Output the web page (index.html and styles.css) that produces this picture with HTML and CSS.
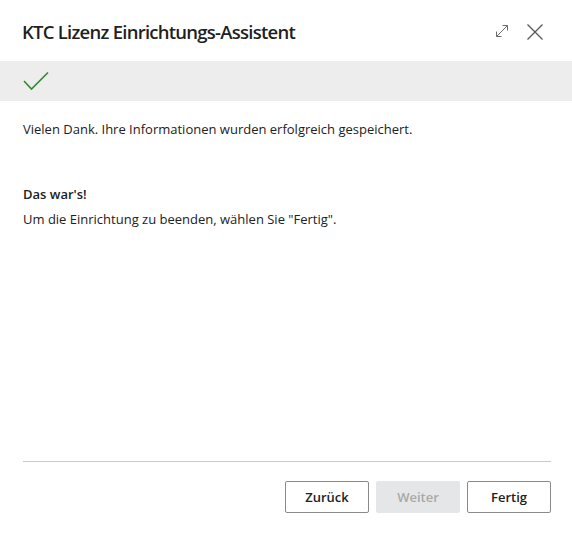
FILE: index.html
```html
<!DOCTYPE html>
<html lang="de">
<head>
<meta charset="utf-8">
<link rel="stylesheet" href="styles.css">
</head>
<body>
<div class="dialog">
  <header class="header">
    <h1 class="title">KTC Lizenz Einrichtungs-Assistent</h1>
    <div class="actions">
      <svg class="icon expand" width="16" height="16" viewBox="0 0 16 16">
        <path d="M2.5 13.5 L13.5 2.5 M8.5 2.5 H13.5 V7.5 M2.5 8.5 V13.5 H7.5" fill="none" stroke="#6b6b6b" stroke-width="1"/>
      </svg>
      <svg class="icon close" width="18" height="18" viewBox="0 0 18 18">
        <path d="M1.5 1.5 L16.5 16.5 M16.5 1.5 L1.5 16.5" fill="none" stroke="#555" stroke-width="1.3"/>
      </svg>
    </div>
  </header>
  <div class="band">
    <svg class="check" width="26" height="20" viewBox="0 0 26 20">
      <path d="M1 10 L8.5 18 L25 1.5" fill="none" stroke="#2e8b2e" stroke-width="1.6"/>
    </svg>
  </div>
  <main class="content">
    <p class="msg">Vielen Dank. Ihre Informationen wurden erfolgreich gespeichert.</p>
    <p class="strong">Das war's!</p>
    <p class="msg2">Um die Einrichtung zu beenden, wählen Sie "Fertig".</p>
  </main>
  <footer class="footer">
    <div class="buttons">
      <button class="btn">Zurück</button>
      <button class="btn disabled">Weiter</button>
      <button class="btn">Fertig</button>
    </div>
  </footer>
</div>
</body>
</html>
```
FILE: styles.css
```css
html, body {
  margin: 0;
  padding: 0;
  background: #fff;
}
body {
  font-family: "Open Sans", "Noto Sans", sans-serif;
  color: #212121;
  width: 572px;
  height: 534px;
  overflow: hidden;
}
.dialog {
  display: flex;
  flex-direction: column;
  height: 534px;
}
.header {
  display: flex;
  align-items: center;
  justify-content: space-between;
  height: 61px;
  padding: 0 28px 0 22px;
  box-sizing: border-box;
}
.title {
  margin: 0;
  font-size: 18.5px;
  font-weight: 600;
  letter-spacing: -0.75px;
  color: #1f1f1f;
  padding-top: 1px;
}
.actions {
  display: flex;
  align-items: center;
  gap: 16px;
  padding-top: 2px;
}
.expand {
  margin-top: -1px;
}
.band {
  height: 40px;
  background: #ededed;
  display: flex;
  align-items: center;
  padding-left: 23px;
}
.check {
  display: block;
}
.content {
  flex: 1;
  padding: 0 23px;
  font-size: 13px;
  line-height: 18px;
}
.content p {
  margin: 0;
}
.msg {
  margin-top: 19px !important;
}
.strong {
  font-weight: 600;
  margin-top: 47px !important;
}
.msg2 {
  margin-top: 7px !important;
}
.footer {
  padding: 0 21px 21px 23px;
}
.buttons {
  border-top: 1px solid #c8c8c8;
  padding-top: 19px;
  display: flex;
  justify-content: flex-end;
  gap: 7px;
}
.btn {
  width: 84px;
  height: 32px;
  font-family: inherit;
  font-size: 13px;
  font-weight: 600;
  color: #212121;
  background: #fff;
  border: 1px solid #8a8a8a;
  border-radius: 2px;
  padding: 0;
}
.btn.disabled {
  background: #e5e6e7;
  border-color: #e5e6e7;
  color: #a9a9a9;
}
```
